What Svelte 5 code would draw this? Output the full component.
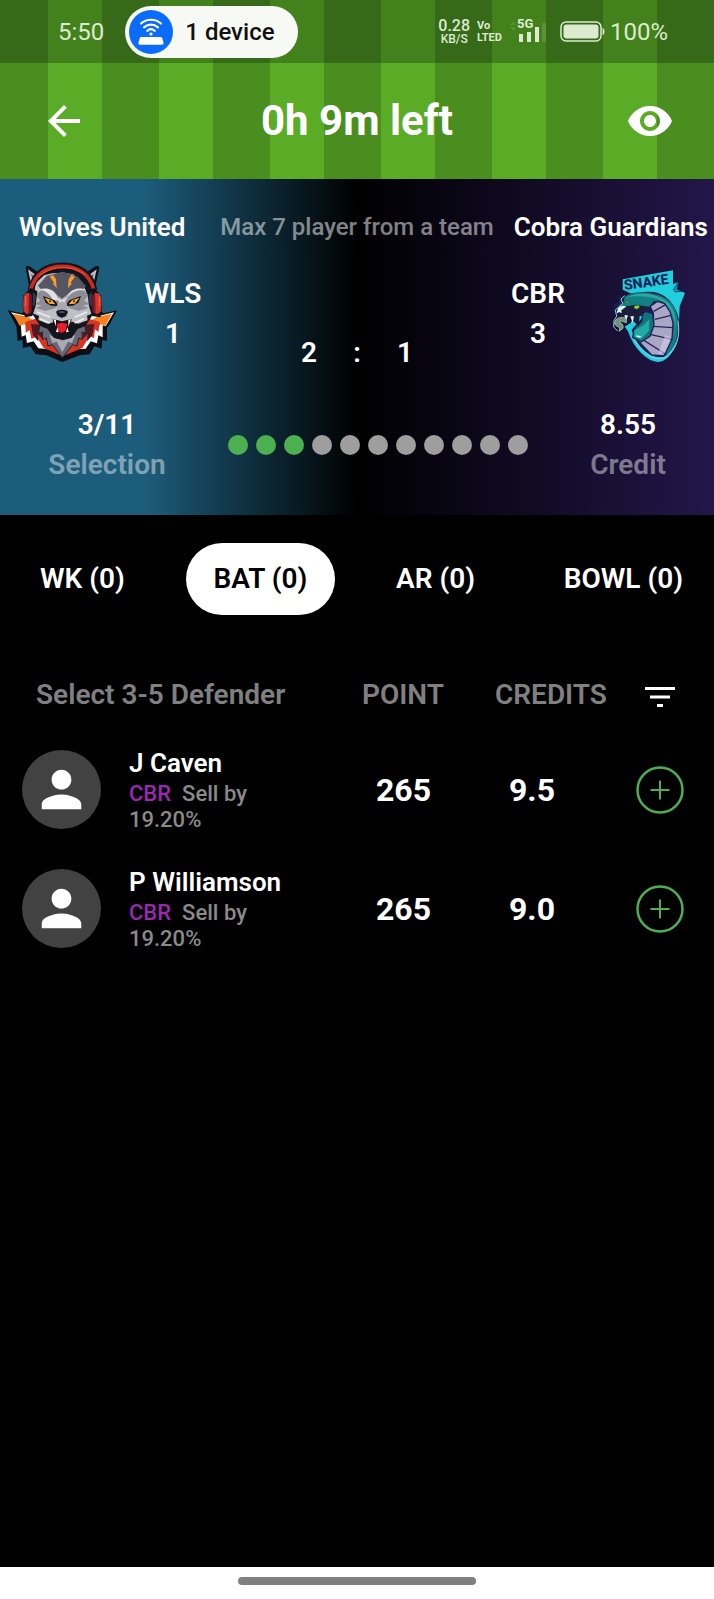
<script>
  const selected = 3;
  const squad = Array.from({ length: 11 }, (_, i) => i < selected);
  const tabs = ['WK (0)', 'BAT (0)', 'AR (0)', 'BOWL (0)'];
  let active = $state(1);
  const players = [
    { name: 'J Caven', team: 'CBR', point: '265', credits: '9.5' },
    { name: 'P Williamson', team: 'CBR', point: '265', credits: '9.0' }
  ];
</script>

<div class="screen">
  <div class="turf">
    <div class="status">
      <span class="clock">5:50</span>
      <div class="device">
        <span class="cast">
          <svg viewBox="0 0 44 44" width="44" height="44" aria-hidden="true">
            <circle cx="22" cy="22" r="22" fill="#0b6bfb" />
            <g fill="none" stroke="#fff" stroke-width="2.2" stroke-linecap="round">
              <path d="M12 13.500c5.800-5 14.200-5 20 0" />
              <path d="M15 17.300c4.200-3.600 9.800-3.600 14 0" />
              <path d="M18.300 20.800c2.200-1.900 5.200-1.900 7.400 0" />
            </g>
            <circle cx="22" cy="24" r="1.600" fill="#fff" />
            <path d="M12.500 27h19c.9 0 1.500.5 1.700 1.300l1.300 4.200c.3 1.300-.5 2.300-1.800 2.300H11.300c-1.300 0-2.100-1-1.800-2.300l1.300-4.200c.2-.8.800-1.300 1.700-1.300z" fill="#fff" />
          </svg>
        </span>
        <span>1 device</span>
      </div>
      <div class="indicators">
        <div class="pair"><span class="rate">0.28</span><span class="unit">KB/S</span></div>
        <div class="pair volte"><span>Vo</span><span>LTED</span></div>
        <div class="signal">
          <span>5G</span>
          <svg viewBox="0 0 40 24" width="40" height="24" aria-hidden="true">
            <path d="M4 5l3-4 3 4zM4 7l3 4 3-4z" fill="#dcebd0" opacity=".15" />
            <path d="M13 14h4v8h-4zM21 12h4v10h-4zM29 7h4v15h-4z" fill="#dcebd0" />
            <path d="M36 3h4v19h-4z" fill="#dcebd0" opacity=".15" />
          </svg>
        </div>
        <svg class="battery" viewBox="0 0 45 22" width="45" height="22" aria-hidden="true">
          <rect x="1" y="1" width="40" height="19" rx="5" fill="none" stroke="#dcebd0" stroke-width="1.500" />
          <rect x="3.500" y="3.500" width="35" height="14" rx="3" fill="#dcebd0" />
          <path d="M43 7.500c1.300.8 1.300 5.200 0 6z" fill="#dcebd0" stroke="#dcebd0" />
        </svg>
        <span class="percent">100%</span>
      </div>
    </div>
    <header>
      <button class="icon" aria-label="Back">
        <svg viewBox="4 4 16 16" width="32" height="32"><path fill="#fff" d="M20 11H7.830l5.590-5.590L12 4l-8 8 8 8 1.410-1.410L7.830 13H20v-2z" /></svg>
      </button>
      <h1>0h 9m left</h1>
      <button class="icon" aria-label="Preview team">
        <svg viewBox="1 4.500 22 15" width="44" height="30"><path fill="#fff" d="M12 4.500C7 4.500 2.730 7.610 1 12c1.730 4.390 6 7.500 11 7.500s9.270-3.110 11-7.500c-1.730-4.390-6-7.500-11-7.500zM12 17c-2.760 0-5-2.240-5-5s2.240-5 5-5 5 2.240 5 5-2.240 5-5 5zm0-8c-1.660 0-3 1.340-3 3s1.340 3 3 3 3-1.340 3-3-1.340-3-3-3z" /></svg>
      </button>
    </header>
  </div>

  <section class="match">
    <div class="names">
      <span>Wolves United</span>
      <span class="rule">Max 7 player from a team</span>
      <span>Cobra Guardians</span>
    </div>

    <div class="teams">
      <div class="side">
        <svg viewBox="20 20 336 306" width="112" height="102" role="img" aria-label="Wolves United logo">
          <path d="M22 165l43 9 20-16h205l20 16 40-9-22 42-8 10v40l-14-4-2 27-22-7-14 24-30 3-52 20-48-20-32-3-16-24-22 5-2-25-14 4-4-44z" fill="#0c0e14" />
          <path d="M32 171l48 10 20-12h178l20 12 43-10-25 42-9-3v36l-13-6-4 24-19-6-15 22-28 2-42 20-40-20-32-3-14-21-20 5-4-24-12 5-3-41z" fill="#fff" />
          <path d="M38 175l46 10 12 8-4 32-20-18-14 4zM335 175l-46 10-12 8 4 32 20-18 14 4z" fill="#f5821f" />
          <path d="M75 200l30-10h160l34 10-5 30-10-8-3 26-13-6-22 36-58 24-58-24-21-34-16 6-5-26-12 8z" fill="#d83424" />
          <path d="M92 206l28 2 10 46-18-18 2 22-16-18zM282 206l-28 2-10 46 18-18-2 22 16-18z" fill="#4c1a22" />
          <path d="M118 207l-3 26 12-3-1 22 12-4 5 24 13-4 30 39 31-39 13 4 5-24 11 4-1-22 12 3-4-26z" fill="#666875" stroke="#22242e" stroke-width="3" />
          <path d="M147 238l9 25 13-4 17 32 17-32 12 4 10-25-22 13h-34z" fill="#a8a9b4" />
          <path d="M91 118L76 38q1-10 12-5l43 30-25 50zM280 118l17-80q0-10-12-5l-43 30 23 50z" fill="#11131b" />
          <path d="M94 94L83 42l37 27zM277 94l12-52-36 27z" fill="#c1c1c7" />
          <path d="M101 90l-9-35 22 17zM270 90l10-35-21 17z" fill="#5c5d68" />
          <path d="M91 112c0-50 42-76 96-76s96 26 96 76l-4 64-24 36-23 9-18 26-26 8-28-8-18-26-22-9-24-36z" fill="#13151d" />
          <path d="M98 138l8-54 25-24 24-6 33-2 31 5 27 25 25 59 8 32-19 8 2 14-28 10-18-6-24 17-30-16-20 5-28-11 2-12-23-10z" fill="#bfc0c5" />
          <path d="M113 91l26-29 48-13 44 14 26 30-18 18-35 4-19 16-20-16-37-5z" fill="#555661" />
          <path d="M106 119l22-18 31 5 21 26-14 26-31 9-29-9 18-8-23-3 19-11zM266 119l-22-18-31 5-22 26 14 26 31 9 29-9-18-8 24-3-20-11z" fill="#8c8d97" />
          <path d="M115 103c20-8 47-4 57 24l13 9 15-10c10-27 37-31 57-22l-17 1c-20 1-34 13-40 25l-14 17-14-12-14 1c-5-19-22-31-43-33z" fill="#e1e1e3" />
          <path d="M128 122l35 13 12 17-22-1-17-9zM242 122l-35 13-12 17 22-1 17-9z" fill="#12141c" />
          <path d="M133 127l22 8 10 12-19-2zM237 127l-22 8-10 12 19-2z" fill="#ffaf20" />
          <circle cx="149" cy="138" r="3" fill="#421709" /><circle cx="221" cy="138" r="3" fill="#421709" />
          <path d="M171 146l14-8 15 8 3 36-18 10-18-10z" fill="#a7a8b0" />
          <path d="M167 169c7-8 29-8 36 0l-7 14-12 4-11-5z" fill="#11131c" />
          <path d="M173 170q12-5 23 1l-12 2z" fill="#5f6677" />
          <path d="M157 191l28 7 29-7-5 40-23 9-24-9z" fill="#17131a" />
          <path d="M169 207q15-10 32 0l-5 19-12 7-11-7z" fill="#eb1d2c" />
          <path d="M159 192l8 2v19zM212 192l-8 2v20zM167 230l4-14 4 15zM205 230l-4-14-4 15z" fill="#fff7ed" />
          <path d="M110 170l39 16M260 170l-37 16M118 190l30 13M251 190l-28 13" stroke="#ececee" stroke-width="5" />
          <path d="M148 64l20 28-1-20-9-13zM224 64l-21 28 2-20 8-13zM157 84l12 15-1-17zM215 84l-12 15 2-17z" fill="#ff9b29" />
          <path d="M91 105C102 51 140 31 186 31s84 20 96 74" fill="none" stroke="#12131b" stroke-width="19" />
          <path d="M91 102C105 54 143 33 186 33s81 21 94 69" fill="none" stroke="#cb2b20" stroke-width="11" />
          <path d="M116 63c38-35 105-33 137-5" fill="none" stroke="#f15a35" stroke-width="3" />
          <path d="M91 98l20 10-5 44-10 30-22 4q-10-23-5-66zM281 98l-20 10 5 44 9 30 25 4q8-23 2-66z" fill="#10121b" />
          <path d="M86 112l-12 3q-8 14-4 53l9 9 12-5zM284 112l14 3q8 14 4 53l-10 9-12-5z" fill="#d5342a" />
          <path d="M86 112l8 7v49l-10 7zM284 112l-8 7v49l10 7z" fill="#791a23" />
          <path d="M76 123v30M297 123v30" stroke="#f7694c" stroke-width="3" />
          <path d="M98 110l9 10-3 29-7 5zM274 110l-9 10 3 29 8 5z" fill="#35384a" />
        </svg>
        <div class="count"><span>WLS</span><span>1</span></div>
      </div>
      <div class="score"><span>2</span><span>:</span><span>1</span></div>
      <div class="side away">
        <div class="count"><span>CBR</span><span>3</span></div>
        <svg class="snake" viewBox="34 36 231 285" width="77" height="95" role="img" aria-label="Cobra Guardians logo">
          <path d="M72 70l151-27v42l14-7-7 20 29 13-16 40-3 70q-7 73-48 94-28 11-65-24-27-27-39-65l-10-14 19-12 10-83-35-16z" fill="#21cedb" />
          <path d="M224 101l17-27-6 25 13 7-19 2z" fill="#119bad" stroke="#172158" stroke-width="2" />
          <text x="78" y="102" transform="rotate(-8 78 102)" class="crest">SNAKE</text>
          <path d="M76 122l21-10 39-4c50-5 79 17 98 59 19 50-1 113-40 136-50 5-86-46-95-82l44-50-18-15-18 12-20-4-26 11-17-6 3-24 16-10-7-13z" fill="#151e50" />
          <path d="M78 122c27-18 77-15 107-3 47 17 57 64 52 106-4 38-20 64-43 75l-33-2 43-50 10-73-21-38-27-2-27 33-17 1-24-12-21 9-19-9 17-18z" fill="#147f83" />
          <path d="M84 124c35-17 83-12 111 6 36 23 38 60 36 88-6-54-28-81-62-91-24-7-50-8-85-3z" fill="#28aaa3" />
          <path d="M154 151l22-15 22 7 16 24 9 34-3 50-24 49-37-3-45-47 37-23 14-28-1-28z" fill="#aaa6c5" stroke="#21205b" stroke-width="4" />
          <path d="M165 166l36-20M169 190l48-12M163 211l60 4M144 233l76 17M131 250l74 47" fill="none" stroke="#29235f" stroke-width="4" />
          <path d="M200 237l17 7-19 48-20 1z" fill="#d0cbe7" opacity=".65" />
          <path d="M137 165l25 8 4 35-12 33-27 17-25-14 5-26 22-22 3-17-17-2z" fill="#137378" stroke="#17245a" stroke-width="4" />
          <path d="M107 223l27-15 18-18-1 34-23 25-21-7z" fill="#21aaa3" />
          <path d="M113 238l15 3-4 4-11-2z" fill="#c5ffe4" />
          <path d="M64 168l20-17 28-5 24 4 17 2-18 22-12 5-3 31-18-16-9 5-2-23-21 8-16-3z" fill="#1e1c3e" />
          <path d="M58 157q10-13 24-5l-14 10 1 10-7-4-8 4zM77 178l5 18 6-18zM95 181l7 20 4-20z" fill="#d6fff0" />
          <path d="M83 187c-24-9-38 6-34 18 5 10 19 5 12 21l12-9c3-17-12-16-8-21 5-3 11 4 18 4z" fill="#6a957f" stroke="#cad9bc" stroke-width="2" />
          <path d="M107 149l12-2 5 6-9 7-9-3zM76 139l17-6-7 9z" fill="#9ad52d" stroke="#145146" stroke-width="2" />
          <path d="M78 119l-11 10 5 13-22 20 4 19-8 13-1 19 12 12M108 251c19 41 62 69 94 52 34-23 43-65 36-109" fill="none" stroke="#9bcde0" stroke-width="3" />
        </svg>
      </div>
    </div>

    <div class="totals">
      <div class="total"><span>3/11</span><span class="label">Selection</span></div>
      <div class="dots">
        {#each squad as filled}<i class:filled></i>{/each}
      </div>
      <div class="total"><span>8.55</span><span class="label">Credit</span></div>
    </div>
  </section>

  <nav>
    {#each tabs as tab, i}
      <button class="tab" class:active={active === i} onclick={() => (active = i)}>{tab}</button>
    {/each}
  </nav>

  <main>
    <table>
      <colgroup><col /><col class="c-point" /><col class="c-credits" /><col class="c-action" /></colgroup>
      <thead>
        <tr>
          <th class="first">Select 3-5 Defender</th>
          <th>POINT</th>
          <th>CREDITS</th>
          <th class="action">
            <button class="icon" aria-label="Filter">
              <svg viewBox="0 0 30 20" width="30" height="20"><path fill="#fff" d="M0 0h30v3H0zM5 8.500h20v3H5zM12 17h6v3h-6z" /></svg>
            </button>
          </th>
        </tr>
      </thead>
      <tbody>
        {#each players as p}
          <tr>
            <td>
              <div class="player">
                <svg viewBox="0 0 80 80" width="79" height="79" aria-hidden="true">
                  <circle cx="40" cy="40" r="40" fill="#424242" />
                  <path fill="#fff" d="M40 40c5.520 0 10-4.480 10-10s-4.480-10-10-10-10 4.480-10 10 4.480 10 10 10zm0 5c-6.670 0-20 3.350-20 10v5h40v-5c0-6.650-13.330-10-20-10z" />
                </svg>
                <div class="info">
                  <span class="name">{p.name}</span>
                  <span class="sell"><b>{p.team}</b>Sell by<br />19.20%</span>
                </div>
              </div>
            </td>
            <td class="value">{p.point}</td>
            <td class="value">{p.credits}</td>
            <td class="action">
              <button class="icon" aria-label="Add {p.name}">
                <svg viewBox="0 0 48 48" width="48" height="48">
                  <circle cx="24" cy="24" r="22.500" fill="none" stroke="#4caf50" stroke-width="2.500" />
                  <path d="M24 14.500v19M14.500 24h19" stroke="#4caf50" stroke-width="2" />
                </svg>
              </button>
            </td>
          </tr>
        {/each}
      </tbody>
    </table>
  </main>

  <div class="gesture"><span></span></div>
</div>

<style>
  :global(body) {
    margin: 0;
    background: #000;
  }
  .screen {
    display: flex;
    flex-direction: column;
    min-height: 100vh;
    background: #000;
    color: #fff;
    font-family: Roboto, 'Liberation Sans', sans-serif;
    font-weight: 600;
    font-size: 28px;
    line-height: 32px;
  }
  button {
    font: inherit;
    color: inherit;
    border: 0;
    padding: 0;
    background: none;
    cursor: pointer;
  }
  svg {
    display: block;
    flex: none;
  }
  .icon {
    display: inline-flex;
  }

  .turf {
    background: repeating-linear-gradient(90deg, #4a8e20 0 48px, #5aac26 48px 102px, #4a8e20 102px 111px);
  }
  .status {
    display: flex;
    align-items: center;
    height: 63px;
    padding: 0 46px 0 58px;
    box-sizing: border-box;
    background: rgba(0, 0, 0, 0.25);
    color: #dcebd0;
    font-size: 24px;
    font-weight: 400;
  }
  .device {
    display: flex;
    align-items: center;
    gap: 12px;
    margin-left: 21px;
    padding: 4px 23px 4px 4px;
    border-radius: 26px;
    background: #f7f9f5;
    color: #111;
    font-size: 24px;
    line-height: 44px;
    font-weight: 500;
  }
  .indicators {
    display: flex;
    align-items: center;
    margin-left: auto;
  }
  .pair {
    display: flex;
    flex-direction: column;
    align-items: center;
    font-weight: 500;
  }
  .rate {
    font-size: 16px;
    line-height: 15px;
  }
  .unit {
    font-size: 12px;
    line-height: 13px;
  }
  .volte {
    align-items: flex-start;
    margin-left: 7px;
    font-size: 11px;
    line-height: 12px;
    font-weight: 700;
  }
  .signal {
    position: relative;
    margin: 0 14px 0 4px;
    font-size: 13px;
    font-weight: 700;
  }
  .signal span {
    position: absolute;
    left: 11px;
    top: -2px;
    line-height: 12px;
  }
  .percent {
    margin-left: 5px;
  }
  header {
    display: grid;
    grid-template-columns: 1fr auto 1fr;
    align-items: center;
    height: 116px;
  }
  header .icon:first-child {
    justify-self: start;
    margin-left: 48px;
  }
  header .icon:last-child {
    justify-self: end;
    margin-right: 42px;
  }
  h1 {
    margin: 0;
    font-size: 42px;
    line-height: 48px;
    font-weight: 700;
  }

  .match {
    padding: 32px 0 34px;
    background: linear-gradient(90deg, #1d5d7c 0, #1d5d7c 20%, #000 50%, #23164a 100%);
  }
  .names {
    display: grid;
    grid-template-columns: 1fr auto 1fr;
    font-size: 26px;
  }
  .names :first-child {
    padding-left: 19px;
  }
  .names :last-child {
    padding-right: 6px;
    text-align: right;
  }
  .names .rule {
    color: rgba(255, 255, 255, 0.5);
    font-size: 24px;
    font-weight: 500;
  }
  .teams {
    display: grid;
    grid-template-columns: 1fr auto 1fr;
    align-items: start;
    height: 121px;
    margin-top: 19px;
  }
  .side {
    display: flex;
    align-items: flex-start;
    gap: 24px;
    padding-left: 7px;
  }
  .away {
    justify-content: flex-end;
    gap: 42px;
    padding: 0 27px 0 0;
  }
  .count {
    display: flex;
    flex-direction: column;
    align-items: center;
    gap: 8px;
    width: 60px;
    margin-top: 16px;
  }
  .score {
    display: flex;
    justify-content: space-between;
    width: 112px;
    margin-top: 75px;
  }
  .snake {
    margin-top: 6px;
  }
  .totals {
    display: grid;
    grid-template-columns: 214px 1fr 172px;
    align-items: center;
    margin-top: 26px;
  }
  .total {
    display: flex;
    flex-direction: column;
    align-items: center;
    gap: 8px;
  }
  .label {
    color: rgba(255, 255, 255, 0.45);
  }
  .dots {
    display: flex;
    justify-content: center;
    gap: 8px;
  }
  .dots i {
    width: 20px;
    height: 20px;
    border-radius: 50%;
    background: #9e9e9e;
  }
  .dots .filled {
    background: #4caf50;
  }

  nav {
    display: flex;
    justify-content: space-between;
    padding: 28px 3px 0 12px;
  }
  .tab {
    padding: 20px 28px;
    border-radius: 36px;
  }
  .tab.active {
    background: #fff;
    color: #000;
  }

  main {
    flex: 1;
    padding-top: 45px;
  }
  table {
    width: 100%;
    table-layout: fixed;
    border-collapse: collapse;
  }
  .c-point {
    width: 133px;
  }
  .c-credits {
    width: 120px;
  }
  .c-action {
    width: 99px;
  }
  th,
  td {
    padding: 0;
    text-align: left;
  }
  th {
    height: 70px;
    color: #808080;
    font-weight: 600;
  }
  th.first {
    padding-left: 36px;
  }
  th .icon,
  td .icon {
    vertical-align: middle;
  }
  .action {
    padding-right: 10px;
    text-align: center;
    line-height: 24px;
  }
  td {
    height: 119px;
  }
  .player {
    display: flex;
    align-items: center;
    gap: 28px;
    padding-left: 22px;
  }
  .info {
    display: flex;
    flex-direction: column;
    gap: 2px;
  }
  .name {
    font-size: 26px;
  }
  .sell {
    color: #8a8a8a;
    font-size: 22px;
    line-height: 26px;
    font-weight: 500;
  }
  .sell b {
    margin-right: 11px;
    color: #9c27b0;
    font-weight: 500;
  }
  .value {
    padding-left: 14px;
    font-size: 32px;
    font-weight: 700;
  }

  .crest {
    fill: #172158;
    font-size: 42px;
    font-weight: 800;
  }

  .gesture {
    display: flex;
    justify-content: center;
    height: 22px;
    padding-top: 10px;
    background: #fff;
  }
  .gesture span {
    width: 33.333%;
    height: 8px;
    border-radius: 4px;
    background: #808080;
  }
</style>
